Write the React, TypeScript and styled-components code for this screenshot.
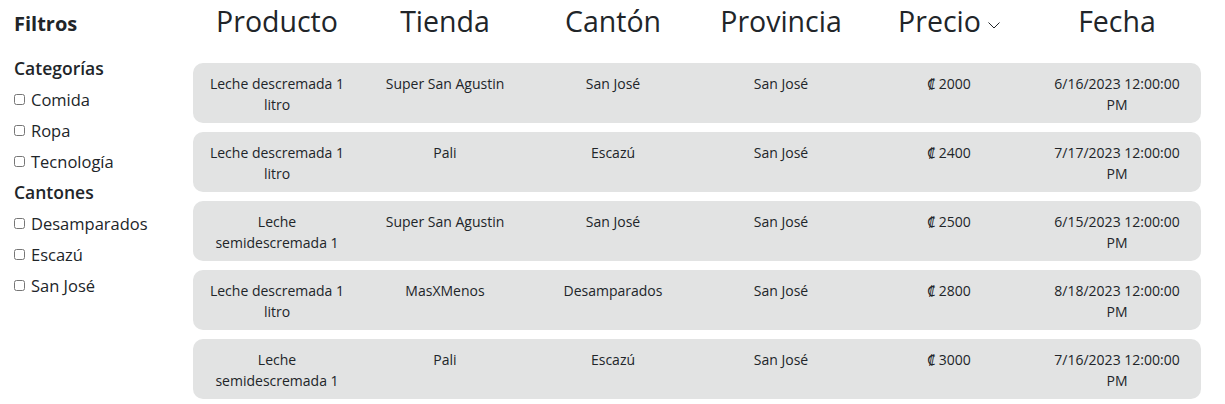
import React from "react";
import styled, { createGlobalStyle } from "styled-components";

const GlobalStyle = createGlobalStyle`
  html, body { margin: 0; padding: 0; background: #ffffff; }
  body { font-family: "Open Sans", "Noto Sans", Arial, sans-serif; color: #212529; }
  * { box-sizing: border-box; }
`;

const Page = styled.div`
  display: flex;
  align-items: flex-start;
  padding: 0 24px 0 14px;
  width: 1225px;
`;

const Sidebar = styled.aside`
  width: 179px;
  flex: none;
  display: flex;
  flex-direction: column;
  padding-top: 9px;
`;

const SideTitle = styled.h2`
  margin: 0 0 14px;
  font-size: 20px;
  line-height: 30px;
  font-weight: 700;
  color: #212529;
`;

const Group = styled.div`
  display: flex;
  flex-direction: column;
`;

const GroupTitle = styled.h3`
  margin: 0;
  font-size: 17.5px;
  line-height: 31px;
  font-weight: 600;
  color: #212529;
`;

const Option = styled.label`
  display: flex;
  align-items: center;
  height: 31px;
  font-size: 16.5px;
  color: #212529;
`;

const Box = styled.input`
  width: 11px;
  height: 11px;
  margin: 0 6px 0 0;
`;

const Main = styled.main`
  flex: 1;
  display: flex;
  flex-direction: column;
`;

const Grid = styled.div`
  display: grid;
  grid-template-columns: repeat(6, 1fr);
`;

const HeaderRow = styled(Grid)`
  height: 63px;
  padding-top: 2px;
`;

const HeadCell = styled.div`
  display: flex;
  justify-content: center;
  align-items: flex-start;
  font-size: 28.5px;
  line-height: 38px;
  font-weight: 400;
  color: #212529;
  gap: 7px;
`;

const Chevron = styled.svg`
  width: 12px;
  height: 7px;
  margin-top: 20px;
`;

const Rows = styled.div`
  display: flex;
  flex-direction: column;
  gap: 9px;
`;

const Row = styled(Grid)`
  background: #e2e3e3;
  border-radius: 10px;
  min-height: 60px;
  padding: 10px 0 8px;
`;

const Cell = styled.div`
  text-align: center;
  font-size: 14px;
  line-height: 21px;
  color: #212529;
  padding: 0 12px;
`;

type Item = { producto: string; tienda: string; canton: string; provincia: string; precio: string; fecha: string };

const data: Item[] = [
  { producto: "Leche descremada 1 litro", tienda: "Super San Agustin", canton: "San José", provincia: "San José", precio: "₡ 2000", fecha: "6/16/2023 12:00:00 PM" },
  { producto: "Leche descremada 1 litro", tienda: "Pali", canton: "Escazú", provincia: "San José", precio: "₡ 2400", fecha: "7/17/2023 12:00:00 PM" },
  { producto: "Leche semidescremada 1", tienda: "Super San Agustin", canton: "San José", provincia: "San José", precio: "₡ 2500", fecha: "6/15/2023 12:00:00 PM" },
  { producto: "Leche descremada 1 litro", tienda: "MasXMenos", canton: "Desamparados", provincia: "San José", precio: "₡ 2800", fecha: "8/18/2023 12:00:00 PM" },
  { producto: "Leche semidescremada 1", tienda: "Pali", canton: "Escazú", provincia: "San José", precio: "₡ 3000", fecha: "7/16/2023 12:00:00 PM" },
];

const categorias = ["Comida", "Ropa", "Tecnología"];
const cantones = ["Desamparados", "Escazú", "San José"];

export default function App() {
  return (
    <>
      <GlobalStyle />
      <Page>
        <Sidebar>
          <SideTitle>Filtros</SideTitle>
          <Group>
            <GroupTitle>Categorías</GroupTitle>
            {categorias.map((c) => (
              <Option key={c}>
                <Box type="checkbox" />
                {c}
              </Option>
            ))}
          </Group>
          <Group>
            <GroupTitle>Cantones</GroupTitle>
            {cantones.map((c) => (
              <Option key={c}>
                <Box type="checkbox" />
                {c}
              </Option>
            ))}
          </Group>
        </Sidebar>
        <Main>
          <HeaderRow>
            <HeadCell>Producto</HeadCell>
            <HeadCell>Tienda</HeadCell>
            <HeadCell>Cantón</HeadCell>
            <HeadCell>Provincia</HeadCell>
            <HeadCell>
              Precio
              <Chevron viewBox="0 0 12 7" fill="none" stroke="#212529" strokeWidth="1">
                <path d="M0.5 0.5 L6 6 L11.5 0.5" />
              </Chevron>
            </HeadCell>
            <HeadCell>Fecha</HeadCell>
          </HeaderRow>
          <Rows>
            {data.map((d, i) => (
              <Row key={i}>
                <Cell>{d.producto}</Cell>
                <Cell>{d.tienda}</Cell>
                <Cell>{d.canton}</Cell>
                <Cell>{d.provincia}</Cell>
                <Cell>{d.precio}</Cell>
                <Cell>{d.fecha}</Cell>
              </Row>
            ))}
          </Rows>
        </Main>
      </Page>
    </>
  );
}
